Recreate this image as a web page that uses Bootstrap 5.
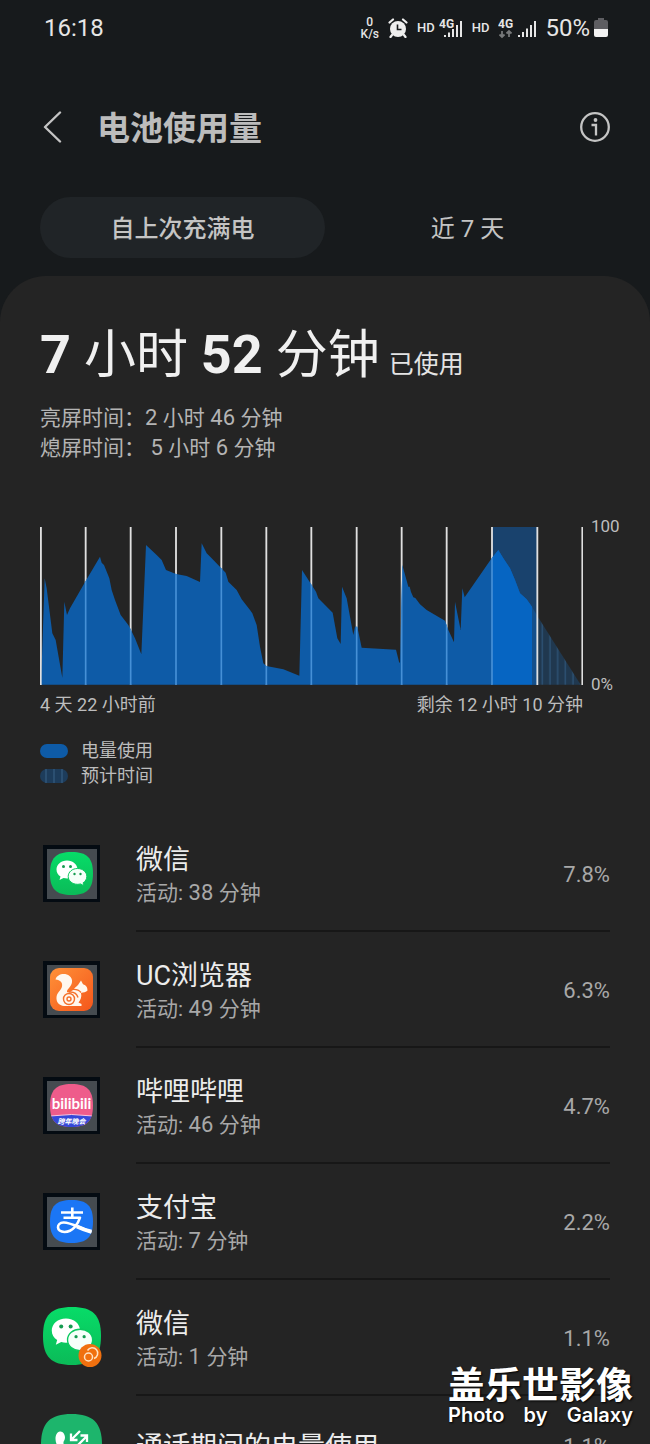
<!DOCTYPE html>
<html lang="zh-CN">
<head>
<meta charset="utf-8">
<meta name="viewport" content="width=device-width, initial-scale=1">
<title>电池使用量</title>
<link rel="stylesheet" href="https://cdn.jsdelivr.net/npm/bootstrap@5.3.0/dist/css/bootstrap.min.css">
<style>
  body { background: #171a1c; color: #bdbdbd; font-family: Roboto, "Noto Sans CJK SC", sans-serif; }
  svg { display: block; flex: none; }
  .edge { padding-left: 40px; padding-right: 40px; }

  .status { height: 56px; padding-left: 44px; padding-right: 42px; color: #e6e6e6; font-size: 24px; line-height: 28px; }
  .speed { font-size: 12px; line-height: 12px; font-weight: 500; text-align: center; }
  .hd { font-size: 13px; line-height: 20px; font-weight: 500; }
  .st-icons { gap: 9px; }

  .title-row { height: 141px; }
  .title-row h1 { font-size: 33px; line-height: 44px; font-weight: 700; margin-left: 35px; padding-top: 4px; color: #bcbcbc; }
  .icon-btn { border: 0; background: none; padding: 0; color: #c4c4c4; }

  .period .nav-link { height: 61px; border-radius: 31px; padding: 2px 0 0; font-size: 24px; line-height: 32px; color: #c4c4c4; }
  .period .nav-link.active { background: #202427; color: #c4c4c4; font-weight: 500; }

  .panel { background: #242424; border-radius: 46px 46px 0 0; margin-top: 18px; padding-top: 48px; }
  .total { font-size: 52px; line-height: 64px; color: #f0f0f0; }
  .total strong { font-size: 54px; line-height: 60px; font-weight: 700; }
  .total small { font-size: 25px; color: #e4e4e4; margin-left: 9px; }
  .times { font-size: 21px; line-height: 30px; margin-top: 6px; color: #b4b4b4; }
  .times b, .app-sub b { font-size: 22px; line-height: 28px; font-weight: 400; }

  .chart { height: 158px; margin-top: 64px; padding-left: 40px; }
  .chart svg { flex: 1 1 0; min-width: 0; height: 100%; }
  .axis { width: 67px; padding-left: 8px; font-size: 17px; line-height: 18px; margin-top: -10px; margin-bottom: -8px; }
  .range { font-size: 18px; line-height: 24px; padding-left: 40px; padding-right: 67px; margin-top: 8px; }
  .legend { font-size: 18px; line-height: 25px; margin-top: 21px; }
  .legend li { gap: 13px; }

  .apps { margin-top: 28px; padding-left: 43px; }
  .app-icon { width: 93px; flex: none; padding-bottom: 2px; }
  .app-icon-lg svg { margin-left: -2px; }
  .app-body { height: 116px; border-bottom: 2px solid #171717; padding-top: 4px; }
  .app-name { font-size: 27px; line-height: 36px; color: #ececec; }
  .app-sub { font-size: 21px; line-height: 30px; color: #a8a8a8; }
  .app-pct { font-size: 22px; line-height: 30px; color: #a8a8a8; }
  .app-short .app-body { height: 98px; border: 0; }

  .stamp { right: 17px; bottom: 17px; color: #fff; text-shadow: 1px 1px 2px #000; }
  .stamp-cn { font-size: 37px; line-height: 42px; font-weight: 700; }
  .stamp-en { font-family: Inter, "Noto Sans", sans-serif; font-size: 20px; line-height: 24px; font-weight: 600; margin-top: -5px; }
  .bili { font-family: Lato, sans-serif; font-weight: 700; font-size: 15px; }
  .gala { font-family: "Noto Sans CJK SC", sans-serif; font-weight: 700; font-size: 7px; font-style: italic; }
</style>
</head>
<body>
<div class="vh-100 d-flex flex-column overflow-hidden position-relative">

  <div class="status d-flex align-items-center justify-content-between flex-shrink-0">
    <span>16:18</span>
    <div class="st-icons d-flex align-items-center">
      <div class="speed">0<br>K/s</div>
      <svg width="20" height="20" viewBox="0 0 20 20" aria-label="闹钟"><circle cx="10" cy="11" r="8" fill="#eee"/><path d="M1.500 4.500 5 1.500M18.500 4.500 15 1.500M4 17l-1.500 2M16 17l1.500 2" stroke="#eee" stroke-width="2.200" stroke-linecap="round"/><path d="M9.500 6.500v5h4" fill="none" stroke="#171a1c" stroke-width="1.600"/></svg>
      <div class="d-flex align-items-center gap-1"><span class="hd">HD</span>
      <svg width="24" height="24" viewBox="0 0 24 24" aria-label="信号"><g fill="#e6e6e6"><path d="M5 19h2v2H5zM9 16.500h2V21H9zM13 13h2v8h-2zM17 9h2v12h-2zM21 5h2v16h-2z"/><text x="0" y="12" font-size="12" font-weight="700">4G</text></g></svg></div>
      <span class="hd">HD</span>
      <svg width="38" height="24" viewBox="0 0 38 24" aria-label="信号"><g fill="#e6e6e6"><text x="0" y="12" font-size="12" font-weight="700">4G</text><path d="M20 19h2v2h-2zM24 16h2v5h-2zM28 12.500h2V21h-2zM32 9h2v12h-2zM36 5h2v16h-2z"/></g><path d="M4 15v6M1.500 18.500 4 21l2.500-2.500M11 21v-6M8.500 17.500 11 15l2.500 2.500" fill="none" stroke="#77797a" stroke-width="1.800"/></svg>
      <div class="d-flex align-items-center gap-1"><span>50%</span>
      <svg width="14" height="20" viewBox="0 0 14 20"><path d="M4 0h6v2h2a2 2 0 0 1 2 2v7H0V4a2 2 0 0 1 2-2h2z" fill="#5e5e62"/><path d="M0 11h14v6a2 2 0 0 1-2 2H2a2 2 0 0 1-2-2z" fill="#f2f2f2"/></svg></div>
    </div>
  </div>

  <header class="flex-shrink-0">
    <div class="title-row edge d-flex align-items-center">
      <button class="icon-btn" aria-label="返回"><svg width="22" height="32" viewBox="0 0 22 32"><path d="M20 1.500 5 16l15 14.500" fill="none" stroke="currentColor" stroke-width="2.400" stroke-linecap="round" stroke-linejoin="round"/></svg></button>
      <h1 class="mb-0 me-auto">电池使用量</h1>
      <button class="icon-btn" aria-label="信息"><svg width="30" height="32" viewBox="0 0 30 32"><g fill="none" stroke="currentColor" stroke-width="2.300"><circle cx="15" cy="16" r="13.800"/><path d="M11.500 14H16v10.500"/></g><circle cx="15.500" cy="9" r="1.900" fill="currentColor"/></svg></button>
    </div>
    <nav class="period nav nav-pills nav-fill flex-nowrap edge">
      <div class="nav-item w-50"><button class="nav-link active w-100">自上次充满电</button></div>
      <div class="nav-item w-50"><button class="nav-link w-100">近 7 天</button></div>
    </nav>
  </header>

  <main class="panel flex-grow-1">
    <section class="edge">
      <h2 class="total mb-0 fw-normal"><strong>7</strong> 小时 <strong>52</strong> 分钟<small>已使用</small></h2>
      <div class="times">亮屏时间：<b>2 </b>小时<b> 46 </b>分钟<br>熄屏时间：<b>&nbsp;5 </b>小时<b> 6 </b>分钟</div>
    </section>

    <div class="chart d-flex">
      <svg viewBox="0 0 1629 474" preserveAspectRatio="none" aria-label="电量图">
        <defs>
          <path id="level" d="M3 473 6 389 14 154 20 184 37 319 47 339 67 452 73 224 81 264 90 244 137 162 180 89 185 107 192 114 208 154 215 189 225 219 242 264 265 294 272 307 285 334 304 382 318 54 350 84 365 99 378 129 408 141 440 147 480 165 485 49 500 79 515 94 544 124 557 137 565 164 590 189 605 217 630 249 637 259 650 294 660 359 670 409 679 417 730 427 778 446 786 129 815 174 828 194 835 214 855 234 878 257 892 334 902 351 906 179 920 214 940 324 945 299 952 299 965 362 1068 368 1077 404 1080 409 1087 114 1105 179 1109 179 1113 195 1120 211 1126 213 1140 232 1160 249 1215 281 1225 309 1242 346 1245 224 1262 309 1267 184 1274 211 1355 94 1375 69 1390 94 1410 124 1425 159 1440 199 1460 217 1476 239V473Z"/>
          <clipPath id="under"><use href="#level"/></clipPath>
          <path id="grid" d="M2 0V474M137 0V474M272 0V474M408 0V474M544 0V474M679 0V474M814 0V474M950 0V474M1085 0V474M1220 0V474M1356 0V474"/>
          <pattern id="stripe" width="23" height="23" patternUnits="userSpaceOnUse"><path d="M0 0h23v23H0z" fill="#20384f"/><path d="M10 0h4v23h-4z" fill="#2d5376"/></pattern>
        </defs>
        <path d="M1356 0h136v473h-136z" fill="#19426d"/>
        <path d="M1476 239 1492 267V473h-16z" fill="#15508c"/>
        <path d="M1492 267 1622 473H1492Z" fill="url(#stripe)"/>
        <use href="#grid" stroke="#e0e0e0" stroke-width="5.500"/>
        <use href="#level" fill="#0e5ba7"/>
        <g clip-path="url(#under)"><path d="M1356 0h120v473h-120z" fill="#0665c2"/><use href="#grid" stroke="#4690d6" stroke-width="5"/></g>
        <path d="M2 0V474M1492 0V474M1627 0V474" stroke="#e0e0e0" stroke-width="5.500"/>
      </svg>
      <div class="axis d-flex flex-column justify-content-between"><span>100</span><span>0%</span></div>
    </div>
    <div class="range d-flex justify-content-between"><span>4 天 22 小时前</span><span>剩余 12 小时 10 分钟</span></div>

    <ul class="legend list-unstyled edge mb-0">
      <li class="d-flex align-items-center"><svg width="28" height="14" viewBox="0 0 28 14"><rect width="28" height="14" rx="7" fill="#0e5ba7"/></svg>电量使用</li>
      <li class="d-flex align-items-center"><svg width="28" height="14" viewBox="0 0 28 14"><rect width="28" height="14" rx="7" fill="#1d3c5b"/><path d="M6 0v14M14 0v14M22 0v14" stroke="#31567a" stroke-width="1.500"/></svg>预计时间</li>
    </ul>

    <ul class="apps list-unstyled edge mb-0">
      <li class="d-flex align-items-center">
        <div class="app-icon"><svg width="57" height="57" viewBox="0 0 57 57">
          <defs>
            <path id="squircle" d="M28.500 7C44 7 50 13 50 28.500S44 50 28.500 50 7 44 7 28.500 13 7 28.500 7Z"/>
            <linearGradient id="wxg" x1="0" y1="0" x2="0" y2="1"><stop offset="0" stop-color="#07dc68"/><stop offset="1" stop-color="#0bbb58"/></linearGradient>
            <g id="tile"><path d="M0 0h57v57H0z" fill="#040b12"/><path d="M4 4h50v50H4z" fill="#454b50"/></g>
            <g id="wx"><use href="#squircle" fill="url(#wxg)"/><path d="M24 15.500c-6 0-10.500 4-10.500 9 0 3 1.500 5.500 4 7L16.500 35l4-2c1.200.300 2.400.500 3.500.500 6 0 10.500-4 10.500-9s-4.500-9-10.500-9z" fill="#fff"/><path d="M34.500 23.500c-5.200 0-9.300 3.500-9.300 7.900s4.100 7.900 9.300 7.900c1 0 2-.100 3-.400l3.500 1.900-.900-3c2.400-1.500 3.700-3.800 3.700-6.400 0-4.400-4.100-7.900-9.300-7.900z" fill="#f5fff9" stroke="#0ac95f" stroke-width="1"/><g fill="#159b50"><circle cx="20.500" cy="21.500" r="1.500"/><circle cx="27.500" cy="21.500" r="1.500"/><circle cx="31.500" cy="29" r="1.200"/><circle cx="37.500" cy="29" r="1.200"/></g></g>
          </defs><use href="#tile"/><use href="#wx"/></svg></div>
        <div class="app-body flex-grow-1 d-flex align-items-center justify-content-between"><div><div class="app-name">微信</div><div class="app-sub">活动:<b> 38 </b>分钟</div></div><span class="app-pct">7.8%</span></div>
      </li>
      <li class="d-flex align-items-center">
        <div class="app-icon"><svg width="57" height="57" viewBox="0 0 57 57"><defs><linearGradient id="ucg" x1="0" y1="0" x2="1" y2="1"><stop offset="0" stop-color="#ff9138"/><stop offset="1" stop-color="#f4561b"/></linearGradient></defs><use href="#tile"/><rect x="7" y="7" width="43" height="43" rx="9" fill="url(#ucg)"/>
          <path d="M12.500 18.500C14 13 22 11.500 26.500 15c4 3.200 3 8.500-.500 12-2.500 2.500-2.500 4-1 4.500 4-.500 6.500-4.500 10-7.500l3-4.500 2 3.800c3.500 1 4.500 3.500 4.500 6.200-1.500 1.500-4 2-6.500 2.500 1 4-.500 7-2.500 9.500l3 1.500V45H21c-5-.500-8-4-7.500-9 .500-4.500 4.500-6.500 5.500-10.500.800-4-1.500-6.500-6.500-7z" fill="#fff7ee"/>
          <g fill="none" stroke="#f5702a" stroke-width="1.400"><circle cx="26" cy="38" r="5.500"/><circle cx="26" cy="38" r="2"/><path d="M26 31c5-.500 8 2 9 5.500M29 28.500c4-.500 7 .500 9 3"/></g></svg></div>
        <div class="app-body flex-grow-1 d-flex align-items-center justify-content-between"><div><div class="app-name">UC浏览器</div><div class="app-sub">活动:<b> 49 </b>分钟</div></div><span class="app-pct">6.3%</span></div>
      </li>
      <li class="d-flex align-items-center">
        <div class="app-icon"><svg width="57" height="57" viewBox="0 0 57 57"><defs><clipPath id="sq"><use href="#squircle"/></clipPath></defs><use href="#tile"/><g clip-path="url(#sq)"><path d="M7 7h43v43H7z" fill="#ee5c8b"/><path d="M7 39q21.500-3 43 0v11H7z" fill="#3548d8"/><path d="M7 39q21.500-3 43 0" fill="none" stroke="#ffc6dc" stroke-width="1"/></g><text class="bili" x="28.500" y="32" text-anchor="middle" fill="#fff">bilibili</text><text class="gala" x="28.500" y="46.500" text-anchor="middle" fill="#fff">跨年晚会</text></svg></div>
        <div class="app-body flex-grow-1 d-flex align-items-center justify-content-between"><div><div class="app-name">哔哩哔哩</div><div class="app-sub">活动:<b> 46 </b>分钟</div></div><span class="app-pct">4.7%</span></div>
      </li>
      <li class="d-flex align-items-center">
        <div class="app-icon"><svg width="57" height="57" viewBox="0 0 57 57"><use href="#tile"/><use href="#squircle" fill="#1b76f5"/><g fill="none" stroke="#fff" stroke-width="2.600"><path d="M18 19.500h22M29.300 14.500v10M20.500 24.700H37C35 31 30 39 21.500 39c-8.500 0-8.500-9-1-9.500 6-.400 14 4.500 28 9.500" stroke-linejoin="round"/><path d="M34 33.500c5 2.500 9.500 4 14.500 5.200" stroke-width="4"/></g></svg></div>
        <div class="app-body flex-grow-1 d-flex align-items-center justify-content-between"><div><div class="app-name">支付宝</div><div class="app-sub">活动:<b> 7 </b>分钟</div></div><span class="app-pct">2.2%</span></div>
      </li>
      <li class="d-flex align-items-center">
        <div class="app-icon"><svg width="60" height="60" viewBox="0 0 60 60"><svg width="58" height="58" viewBox="7 7 43 43"><use href="#wx"/></svg><circle cx="47" cy="48.500" r="11.500" fill="#f0700f"/><g fill="none" stroke="#ffe2c2" stroke-width="1.500"><circle cx="45.500" cy="50" r="4"/><path d="M44.500 43.500a5.500 5.500 0 1 1 6.500 8"/></g></svg></div>
        <div class="app-body flex-grow-1 d-flex align-items-center justify-content-between"><div><div class="app-name">微信</div><div class="app-sub">活动:<b> 1 </b>分钟</div></div><span class="app-pct">1.1%</span></div>
      </li>
      <li class="app-short d-flex align-items-center">
        <div class="app-icon app-icon-lg"><svg width="61" height="61" viewBox="0 0 61 61"><path d="M30.500 0C52 0 61 9 61 30.500S52 61 30.500 61 0 52 0 30.500 9 0 30.500 0Z" fill="#1db56c"/><path d="M19 17.500c2.500-.500 5 2.500 5 6 0 3-2 3.500-1.500 6 1 4 5 8 9 9 2 .500 3-2 6-2 3.500 0 6.500 3 6 5.500-1 4-6 5.500-10 4.500C24 44 14.500 33 14.500 25c0-4 1.500-7 4.500-7.500z" fill="#fff"/><path d="M39 17l-9 9M30 19.500V26h6.500M37 31l9-9M39.500 21.500H46V28" fill="none" stroke="#fff" stroke-width="2.300"/></svg></div>
        <div class="app-body flex-grow-1 d-flex align-items-center justify-content-between"><div class="app-name">通话期间的电量使用</div><span class="app-pct">1.1%</span></div>
      </li>
    </ul>
  </main>

  <div class="stamp position-absolute">
    <div class="stamp-cn">盖乐世影像</div>
    <div class="stamp-en d-flex justify-content-between"><span>Photo</span> <span>by</span> <span>Galaxy</span></div>
  </div>
</div>
<script src="https://cdn.jsdelivr.net/npm/bootstrap@5.3.0/dist/js/bootstrap.bundle.min.js"></script>
</body>
</html>
